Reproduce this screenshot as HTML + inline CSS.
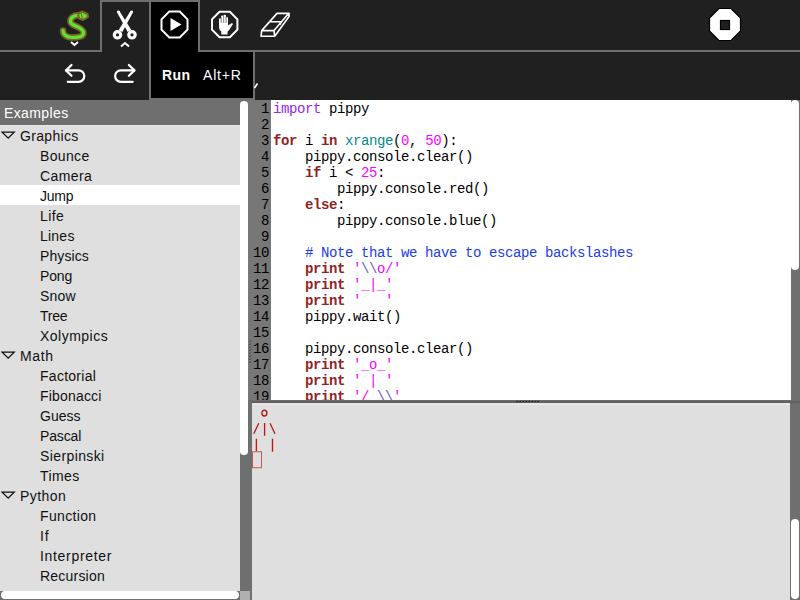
<!DOCTYPE html>
<html><head><meta charset="utf-8">
<style>
*{margin:0;padding:0;box-sizing:border-box}
html,body{width:800px;height:600px;overflow:hidden;background:#202020;font-family:"Liberation Sans",sans-serif}
.a{position:absolute}
.g{background:#6f6f6f}
.mono{font-family:"Liberation Mono",monospace;font-size:14px;letter-spacing:-0.4px;line-height:16px;white-space:pre}
#tree div{position:absolute;left:0;width:240px;height:20px;padding-top:1px;font-size:14px;line-height:20px;color:#111;letter-spacing:0.5px}
#tree .c{padding-left:40px}
#tree .p{padding-left:20px}
#tree .sel{background:#fff}
.tri{position:absolute;left:1px;top:6px}
#gut div{height:16px;text-align:right;white-space:normal}
.kw{color:#931f1f;font-weight:bold}
.im{color:#9426ee}
.bi{color:#008b8b}
.nu{color:#ff00ff}
.st{color:#ff00ff}
.es{color:#6a5acd}
.cm{color:#1c3ce6}
</style></head><body>

<!-- run button + palette (black fills) -->
<div class="a" style="left:149px;top:0;width:51px;height:100px;background:#000"></div>
<div class="a" style="left:149px;top:50px;width:106px;height:50px;background:#000"></div>
<!-- toolbar lines -->
<div class="a g" style="left:0;top:50px;width:101px;height:2px"></div>
<div class="a g" style="left:198px;top:50px;width:602px;height:2px"></div>
<!-- edit tab border -->
<div class="a g" style="left:100px;top:0;width:2px;height:52px"></div>
<div class="a g" style="left:100px;top:0;width:100px;height:2px"></div>
<!-- run/palette borders -->
<div class="a g" style="left:149px;top:0;width:2px;height:100px"></div>
<div class="a g" style="left:198px;top:0;width:2px;height:52px"></div>
<div class="a g" style="left:253px;top:50px;width:2px;height:50px"></div>
<div class="a g" style="left:149px;top:98px;width:106px;height:2px"></div>

<div class="a" style="left:162px;top:67px;font-size:14px;font-weight:bold;color:#fff;letter-spacing:0.44px">Run</div>
<div class="a" style="left:203px;top:67px;font-size:14px;color:#fff;letter-spacing:0.8px">Alt+R</div>
<svg class="a" style="left:250px;top:80px" width="12" height="12"><path d="M4.5 8 L7.5 3.5" stroke="#fff" stroke-width="1.6"/></svg>

<!-- icons top -->
<svg class="a" style="left:50px;top:0" width="50" height="50">
  <path d="M30 15.5 C24 14.5 20 18 20.5 22 C21 26 33 27 33.5 32.5 C34 37 27 37.5 22 37.5 C16 37.5 13 34 13 30.5" fill="none" stroke="#7d6520" stroke-width="6.5" stroke-linecap="round"/>
  <path d="M30 15.5 C24 14.5 20 18 20.5 22 C21 26 33 27 33.5 32.5 C34 37 27 37.5 22 37.5 C16 37.5 13 34 13 30.5" fill="none" stroke="#5ee23a" stroke-width="3.2" stroke-linecap="round"/>
  <path d="M28 13.5 L32 11.5 L37.5 14 L38 17 L33 20 L29 18.5 Z" fill="#5ee23a" stroke="#7d6520" stroke-width="2" stroke-linejoin="round"/>
  <path d="M31 13 L32.5 18.5" stroke="#7d6520" stroke-width="1"/>
  <path d="M21 42 L24.5 45 L28 42" fill="none" stroke="#fff" stroke-width="2"/>
</svg>
<svg class="a" style="left:100px;top:0" width="50" height="50">
  <polygon points="17.13,12.48 27.69,32.06 31.31,29.94 19.47,11.12" fill="#fff"/><polygon points="30.53,11.12 18.69,29.94 22.31,32.06 32.87,12.48" fill="#fff"/>
  <circle cx="18.3" cy="11.8" r="1.35" fill="#fff"/><circle cx="31.7" cy="11.8" r="1.35" fill="#fff"/>
  <circle cx="17.5" cy="34.8" r="3.2" fill="none" stroke="#fff" stroke-width="3.2"/>
  <circle cx="32" cy="34.8" r="3.2" fill="none" stroke="#fff" stroke-width="3.2"/>
  <path d="M21 46.5 L25 43 L29 46.5" fill="none" stroke="#fff" stroke-width="2"/>
</svg>
<svg class="a" style="left:150px;top:0" width="50" height="50">
  <polygon points="19.3,11.5 29.7,11.5 37.5,19.3 37.5,29.7 29.7,37.5 19.3,37.5 11.5,29.7 11.5,19.3" fill="none" stroke="#fff" stroke-width="2"/>
  <path d="M20.5 18 L31.5 24.5 L20.5 31 Z" fill="#fff"/>
</svg>
<svg class="a" style="left:200px;top:0" width="50" height="50">
  <polygon points="19.5,11.8 29.9,11.8 37.4,19.3 37.4,29.7 29.9,37.2 19.5,37.2 12,29.7 12,19.3" fill="none" stroke="#fff" stroke-width="2"/>
  <path d="M19 19.5 Q19 18 20 18 Q21 18 21 19.5 L21 16.5 Q21 15.5 22.3 15.5 Q23.5 15.5 23.5 16.5 L23.5 15.8 Q23.5 14.8 24.8 14.8 Q26 14.8 26 15.8 L26 18 Q26 17 27 17 Q28 17 28 18 L28 25.5 L31 23.5 Q32.5 22.8 33 24 L29.5 29.5 Q28.5 31 27.5 31.5 L27.5 34.6 L21.3 34.6 L21.3 31.5 Q19 30 19 27 Z" fill="#fff"/>
  <path d="M21.2 17 L21.2 23 M23.7 16 L23.7 23 M26.1 17 L26.1 23" stroke="#000" stroke-width="0.5"/>
</svg>
<svg class="a" style="left:250px;top:0" width="50" height="50">
  <path d="M11 36.3 L11.7 30.6 L27 13.4 L39.1 13.4 L39 16.5 L24.7 36.3 Z M11.7 30.6 L24 30.6 L38.6 13.6 M24 30.6 L24.7 36.3 M20.3 21.7 L31.5 21.7 M31.5 21.7 L29.8 24.8" fill="none" stroke="#fff" stroke-width="1.6" stroke-linejoin="round"/>
</svg>
<svg class="a" style="left:700px;top:0" width="50" height="50">
  <polygon points="19,8.5 31,8.5 40.5,18 40.5,31 31,40.5 19,40.5 9.5,31 9.5,18" fill="#fff" stroke="#000" stroke-width="1.2"/>
  <rect x="20.5" y="20.5" width="9" height="9" fill="#202020" stroke="#000" stroke-width="1.2"/>
</svg>
<!-- undo redo -->
<svg class="a" style="left:50px;top:50px" width="100" height="50">
  <path d="M16 20.4 L28.6 20.4 A5.7 5.7 0 0 1 28.6 31.8 L17.8 31.8" fill="none" stroke="#fff" stroke-width="2.2" stroke-linecap="round"/>
  <path d="M21.5 15 L16 20.4 L21.5 25.8" fill="none" stroke="#fff" stroke-width="2.2" stroke-linecap="round" stroke-linejoin="round"/>
  <path d="M84.4 20.4 L70.8 20.4 A5.7 5.7 0 0 0 70.8 31.8 L82.7 31.8" fill="none" stroke="#fff" stroke-width="2.2" stroke-linecap="round"/>
  <path d="M78.9 15 L84.4 20.4 L78.9 25.8" fill="none" stroke="#fff" stroke-width="2.2" stroke-linecap="round" stroke-linejoin="round"/>
</svg>

<!-- left panel -->
<div class="a g" style="left:0;top:100px;width:240px;height:25px"></div>
<div class="a" style="left:4px;top:101px;height:25px;line-height:25px;font-size:14px;color:#fff;letter-spacing:0.38px">Examples</div>
<div class="a" style="left:0;top:125px;width:240px;height:466px;background:#dfdfdf;overflow:hidden" id="tree">
  <div class="p" style="top:0px;letter-spacing:0.32px"><svg class="tri" width="16" height="9"><path d="M1.2 1.2 L13.2 1.2 L7.2 7.2 Z" fill="none" stroke="#111" stroke-width="1.3"/></svg>Graphics</div>
  <div class="c" style="top:20px;letter-spacing:0.35px">Bounce</div>
  <div class="c" style="top:40px;letter-spacing:0.4px">Camera</div>
  <div class="c sel" style="top:60px;letter-spacing:-0.25px">Jump</div>
  <div class="c" style="top:80px;letter-spacing:0.41px">Life</div>
  <div class="c" style="top:100px;letter-spacing:0.23px">Lines</div>
  <div class="c" style="top:120px;letter-spacing:0.1px">Physics</div>
  <div class="c" style="top:140px;letter-spacing:-0.13px">Pong</div>
  <div class="c" style="top:160px;letter-spacing:0.2px">Snow</div>
  <div class="c" style="top:180px;letter-spacing:-0.26px">Tree</div>
  <div class="c" style="top:200px;letter-spacing:0.48px">Xolympics</div>
  <div class="p" style="top:220px;letter-spacing:0.63px"><svg class="tri" width="16" height="9"><path d="M1.2 1.2 L13.2 1.2 L7.2 7.2 Z" fill="none" stroke="#111" stroke-width="1.3"/></svg>Math</div>
  <div class="c" style="top:240px;letter-spacing:0.27px">Factorial</div>
  <div class="c" style="top:260px;letter-spacing:0.18px">Fibonacci</div>
  <div class="c" style="top:280px;letter-spacing:0.0px">Guess</div>
  <div class="c" style="top:300px;letter-spacing:-0.13px">Pascal</div>
  <div class="c" style="top:320px;letter-spacing:0.39px">Sierpinski</div>
  <div class="c" style="top:340px;letter-spacing:0.4px">Times</div>
  <div class="p" style="top:360px;letter-spacing:0.43px"><svg class="tri" width="16" height="9"><path d="M1.2 1.2 L13.2 1.2 L7.2 7.2 Z" fill="none" stroke="#111" stroke-width="1.3"/></svg>Python</div>
  <div class="c" style="top:380px;letter-spacing:0.35px">Function</div>
  <div class="c" style="top:400px;letter-spacing:0.76px">If</div>
  <div class="c" style="top:420px;letter-spacing:0.68px">Interpreter</div>
  <div class="c" style="top:440px;letter-spacing:0.21px">Recursion</div>
  <div class="p" style="top:460px;letter-spacing:0.32px"><svg class="tri" width="16" height="9"><path d="M1.2 1.2 L13.2 1.2 L7.2 7.2 Z" fill="none" stroke="#111" stroke-width="1.3"/></svg>Sugar</div>
</div>
<div class="a" style="left:0;top:125px;width:240px;height:1px;background:#e8e8e8"></div>
<!-- left scrollbars -->
<div class="a" style="left:240px;top:100px;width:12px;height:500px;background:#6f6f6f"></div>
<div class="a" style="left:240px;top:101px;width:7.5px;height:354px;background:#fff;border-radius:3.75px"></div>
<div class="a" style="left:0;top:591px;width:240px;height:9px;background:#6f6f6f"></div>
<div class="a" style="left:1px;top:591px;width:238px;height:8px;background:#fff;border-radius:4px"></div>
<div class="a" style="left:240px;top:591px;width:10px;height:9px;background:#b0b0b0"></div>

<!-- gutter -->
<div class="a" style="left:248px;top:100px;width:23px;height:300px;background:#777"></div>
<div class="a mono" id="gut" style="left:241px;top:101px;width:28px;height:299px;overflow:hidden;color:#000"><div>1</div><div>2</div><div>3</div><div>4</div><div>5</div><div>6</div><div>7</div><div>8</div><div>9</div><div>10</div><div>11</div><div>12</div><div>13</div><div>14</div><div>15</div><div>16</div><div>17</div><div>18</div><div>19</div></div>
<!-- editor -->
<div class="a" style="left:271px;top:100px;width:520px;height:300px;background:#fff"></div>
<div class="a mono" style="left:273px;top:101px;width:518px;height:299px;overflow:hidden;color:#000"><span class="im">import</span> pippy

<span class="kw">for</span> i <span class="kw">in</span> <span class="bi">xrange</span>(<span class="nu">0</span>, <span class="nu">50</span>):
    pippy.console.clear()
    <span class="kw">if</span> i &lt; <span class="nu">25</span>:
        pippy.console.red()
    <span class="kw">else</span>:
        pippy.console.blue()

    <span class="cm"># Note that we have to escape backslashes</span>
    <span class="kw">print</span> <span class="st">'<span class="es">\\</span>o/'</span>
    <span class="kw">print</span> <span class="st">'_|_'</span>
    <span class="kw">print</span> <span class="st">'   '</span>
    pippy.wait()

    pippy.console.clear()
    <span class="kw">print</span> <span class="st">'_o_'</span>
    <span class="kw">print</span> <span class="st">' | '</span>
    <span class="kw">print</span> <span class="st">'/ <span class="es">\\</span>'</span>
</div>
<div class="a" style="left:791px;top:100px;width:9px;height:300px;background:#6f6f6f"></div>
<div class="a" style="left:791px;top:100px;width:8px;height:170px;background:#fff;border-radius:4px"></div>

<!-- separator -->
<div class="a" style="left:251px;top:400px;width:549px;height:3px;background:linear-gradient(#6e6e6e,#5a5a5a)"></div>
<!-- handles -->
<svg class="a" style="left:514px;top:399px" width="26" height="5"><path d="M2.5 3.2 L3.8 1.8" stroke="#000" stroke-width="1"/><path d="M5.5 3.2 L6.8 1.8" stroke="#000" stroke-width="1"/><path d="M8.5 3.2 L9.8 1.8" stroke="#000" stroke-width="1"/><path d="M11.5 3.2 L12.8 1.8" stroke="#000" stroke-width="1"/><path d="M14.5 3.2 L15.8 1.8" stroke="#000" stroke-width="1"/><path d="M17.5 3.2 L18.8 1.8" stroke="#000" stroke-width="1"/><path d="M20.5 3.2 L21.8 1.8" stroke="#000" stroke-width="1"/><path d="M23.5 3.2 L24.8 1.8" stroke="#000" stroke-width="1"/></svg>
<svg class="a" style="left:247px;top:338px" width="6" height="26"><path d="M2.5 3.8 L3.8 2.5" stroke="#222" stroke-width="1"/><path d="M2.5 6.8 L3.8 5.5" stroke="#222" stroke-width="1"/><path d="M2.5 9.8 L3.8 8.5" stroke="#222" stroke-width="1"/><path d="M2.5 12.8 L3.8 11.5" stroke="#222" stroke-width="1"/><path d="M2.5 15.8 L3.8 14.5" stroke="#222" stroke-width="1"/><path d="M2.5 18.8 L3.8 17.5" stroke="#222" stroke-width="1"/><path d="M2.5 21.8 L3.8 20.5" stroke="#222" stroke-width="1"/><path d="M2.5 24.8 L3.8 23.5" stroke="#222" stroke-width="1"/></svg>
<!-- console -->
<div class="a" style="left:252px;top:403px;width:538px;height:197px;background:#dfdfdf;border-top:2px solid #e7e7e7"></div>
<svg class="a" style="left:250px;top:403px" width="40" height="70">
  <ellipse cx="14.4" cy="10.1" rx="2.5" ry="2.9" fill="none" stroke="#b41c1c" stroke-width="1.4"/>
  <path d="M3.75 30.75 L8.75 20.3 M14.6 19.9 L14.6 32.8 M20 20.3 L25 30.75 M6.4 35.75 L6.4 48 M22.5 35.75 L22.5 48.7" stroke="#b41c1c" stroke-width="1.35" fill="none"/>
  <rect x="2.5" y="48.75" width="9" height="16" fill="none" stroke="#c05a5a" stroke-width="1"/>
</svg>
<div class="a" style="left:790px;top:403px;width:10px;height:197px;background:#6f6f6f"></div>
<div class="a" style="left:791px;top:519px;width:8px;height:80px;background:#fff;border-radius:4px"></div>

</body></html>
